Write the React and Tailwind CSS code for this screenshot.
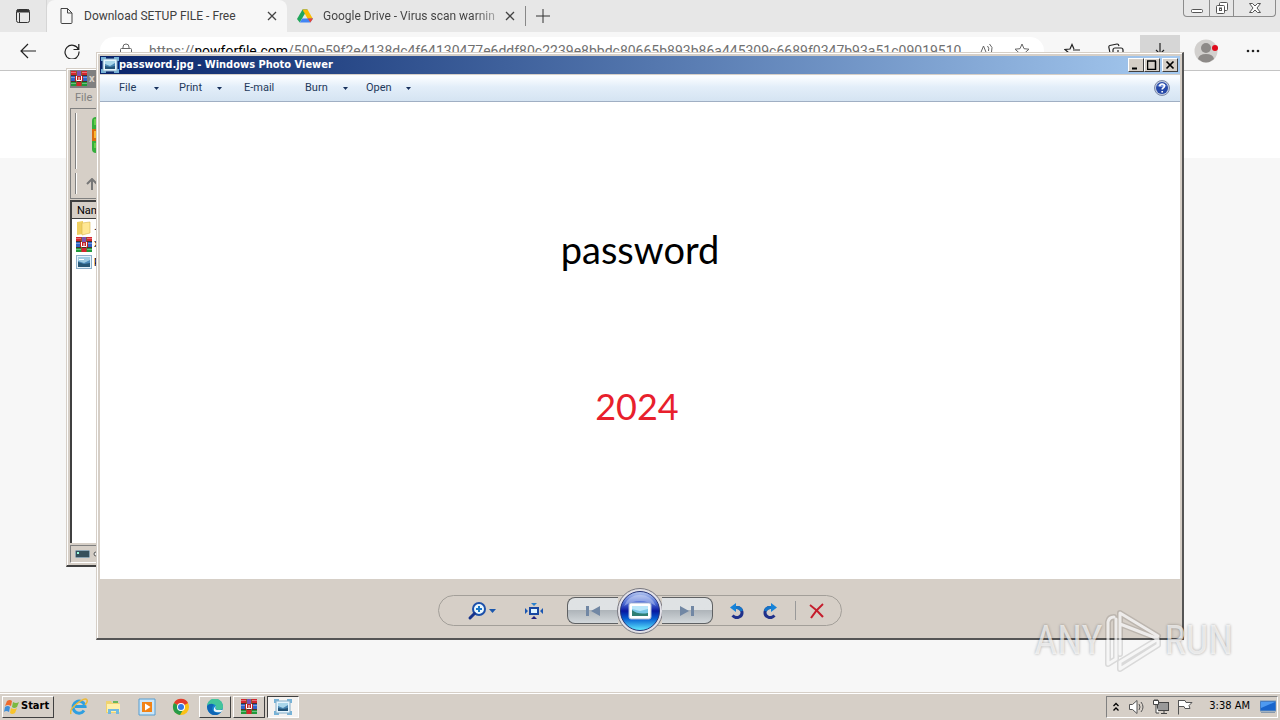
import React from "react";

const RAISED =
  "border border-t-white border-l-white border-r-[#404040] border-b-[#404040] bg-[#d6cfc7]";
const URL_PATH =
  "/500e59f2e4138dc4f64130477e6ddf80c2239e8bbdc80665b893b86a445309c6689f0347b93a51c09019510";

function ArchiveIcon() {
  return (
    <svg className="size-4 shrink-0" viewBox="0 0 16 16" aria-hidden="true">
      <path d="M0 0h16v15H0z" fill="#4a3028" />
      <path d="M0 0h5v4H0zM11 0h5v4h-5z" fill="#d4262e" />
      <path d="M6 0h4v5H6z" fill="#7a55b5" />
      <path d="M0 5h4v5H0zM12 5h4v5h-4z" fill="#2d62c8" />
      <path d="M0 11h5v4H0zM11 11h5v4h-5z" fill="#1f9a3b" />
      <path d="M6 11h4v4H6z" fill="#d4262e" />
      <path d="M5 0h1v15H5zM10 0h1v15h-1z" fill="#8b5a2a" />
      <path d="M4 5h8v5H4z" fill="#c22020" />
      <path d="M5.500 5v4.500h5V5M8 6v3" stroke="#fff" strokeWidth="1" fill="none" />
      <path d="M0 1.500h5M11 1.500h5M0 6.500h4M12 6.500h4M0 12.500h5M11 12.500h5" stroke="#fff" strokeOpacity=".35" />
    </svg>
  );
}

function PictureIcon() {
  return (
    <svg className="size-4 shrink-0" viewBox="0 0 16 16" aria-hidden="true">
      <path d="M0 1h16v14H0z" fill="#8db0ca" />
      <path d="M1 2h14v12H1z" fill="#e3f1fa" />
      <path d="M2 3h12v10H2z" fill="#4d8ab8" />
      <path d="M2 3h12v3L8 9 2 7z" fill="#9fcbe2" />
      <path d="M2 8l6 2 6-1v4H2z" fill="#285877" />
      <path d="M3 5h5v1H3z" fill="#fff" />
    </svg>
  );
}

function ViewerIcon() {
  return (
    <svg className="h-4 w-[18px] shrink-0" viewBox="0 0 18 16" aria-hidden="true">
      <path d="M0 0h5v2H3v2H0zM13 0h5v4h-3V2h-2zM0 12h3v2h2v2H0zM15 12h3v4h-5v-2h2z" fill="#76b3d8" />
      <path d="M2 2h14v12H2z" fill="#e6f5fd" stroke="#86aec8" />
      <path d="M4 4h10v8H4z" fill="#4a86b2" />
      <path d="M4 4h10v2L9 9 4 7z" fill="#a9d6ea" />
      <path d="M4 9l5 1 5-1v3H4z" fill="#245477" />
    </svg>
  );
}

function Caret() {
  return (
    <svg className="h-[3px] w-[5px]" viewBox="0 0 5 3" aria-hidden="true">
      <path d="M0 0h5L2.500 3z" fill="#17305c" />
    </svg>
  );
}

function Browser() {
  return (
    <main className="flex flex-1 flex-col bg-[#f7f7f7] font-['Roboto','Open_Sans',sans-serif] text-xs text-[#404040]">
      <div className="flex h-8 items-stretch bg-[#e7e7e7]">
        <button aria-label="Tab actions" className="flex w-[47px] items-center justify-center border-r border-[#d5d5d5]">
          <svg className="size-4" viewBox="0 0 16 16" fill="none" stroke="#333">
            <rect x="1.500" y="1.500" width="13" height="13" rx="2" />
            <path d="M2 3h12" strokeWidth="3" />
            <path d="M4.500 5v9" />
          </svg>
        </button>
        <div className="flex w-60 items-center rounded-t-lg bg-[#f7f7f7] pl-3 pr-1.5">
          <svg className="mr-2.5 h-4 w-[15px]" viewBox="0 0 15 16" fill="none" stroke="#444">
            <path d="M2 .5h6.500L13 5v9.500a1 1 0 0 1-1 1H3a1 1 0 0 1-1-1v-14zM8.500.5V5H13" />
          </svg>
          <span className="flex-1 whitespace-nowrap">Download SETUP FILE - Free</span>
          <button aria-label="Close tab" className="p-1">
            <svg className="size-2.5" viewBox="0 0 10 10" stroke="#444" strokeWidth="1.300"><path d="M1 1l8 8M9 1l-8 8" /></svg>
          </button>
        </div>
        <div className="flex w-[238px] items-center pl-2.5 pr-1.5">
          <svg className="mr-2.5 h-4 w-4" viewBox="0 0 16 16">
            <path d="M5.500 1.500h5L8 6z" fill="#188038" />
            <path d="M5.500 1.500L0 11l2.700 3.500L8 5.500z" fill="#20a65a" />
            <path d="M10.500 1.500L16 11h-5.300L5.500 1.500z" fill="#fbbc04" />
            <path d="M5.300 10.500H16l-2.700 4H2.700z" fill="#4285f4" />
            <path d="M10.700 10.500H16l-2.700 4z" fill="#ea4335" />
          </svg>
          <span className="flex-1 whitespace-nowrap bg-linear-to-r from-[#404040] from-85% to-[#c8c8c8] bg-clip-text text-transparent">Google Drive - Virus scan warnin</span>
          <button aria-label="Close tab" className="p-1">
            <svg className="size-2.5" viewBox="0 0 10 10" stroke="#444" strokeWidth="1.300"><path d="M1 1l8 8M9 1l-8 8" /></svg>
          </button>
        </div>
        <button aria-label="New tab" className="my-1.5 border-l border-[#888] px-2.5">
          <svg className="size-3.5" viewBox="0 0 14 14" stroke="#333"><path d="M7 0v14M0 7h14" /></svg>
        </button>
        <div className="ml-auto mr-1 flex h-[17px] rounded-b border border-t-0 border-[#8c8c8c]">
          <button aria-label="Minimize browser" className="flex w-[25px] items-end justify-center pb-[3px]">
            <svg className="h-1 w-3" viewBox="0 0 12 4" fill="#fff" stroke="#555"><rect x=".5" y=".5" width="11" height="3" rx="1" /></svg>
          </button>
          <button aria-label="Restore browser" className="flex w-[25px] items-center justify-center border-x border-[#8c8c8c]">
            <svg className="size-3" viewBox="0 0 12 12" fill="#fff" stroke="#555">
              <rect x="3.500" y=".5" width="8" height="8" rx="1" /><rect x=".5" y="3.500" width="8" height="8" rx="1" /><rect x="3.500" y="6" width="2" height="2.500" />
            </svg>
          </button>
          <button aria-label="Close browser" className="flex w-[41px] items-center justify-center">
            <svg className="h-2.5 w-3" viewBox="0 0 12 10" fill="#fff" stroke="#555">
              <path d="M.5.5h3L6 3 8.500.5h3L8 5l3.500 4.500h-3L6 7 3.500 9.500h-3L4 5z" />
            </svg>
          </button>
        </div>
      </div>
      <div className="flex h-[39px] items-center border-b border-[#c4c4c4] pl-5 pr-5">
        <button aria-label="Back">
          <svg className="h-4 w-4" viewBox="0 0 16 16" fill="none" stroke="#222" strokeWidth="1.200"><path d="M16 8H1M8 1L1 8l7 7" /></svg>
        </button>
        <button aria-label="Refresh" className="ml-7">
          <svg className="size-4" viewBox="0 0 16 16" fill="none" stroke="#222" strokeWidth="1.200"><path d="M14.500 6.500A7 7 0 1 0 15 8.500M14.800 1v5.500H9.500" /></svg>
        </button>
        <div className="ml-5 flex h-7 flex-1 items-center rounded-full bg-white pl-[19px] pr-3.5 text-[#707070]">
          <svg className="mr-4 h-4 w-3.5" viewBox="0 0 14 16" fill="none" stroke="#666"><rect x="1.500" y="5.500" width="11" height="9" rx="1" /><path d="M4 5.500V4a3 3 0 0 1 6 0v1.500" /></svg>
          <p className="whitespace-nowrap text-sm">
            https://<span className="text-black">nowforfile.com</span>{URL_PATH}
          </p>
          <button aria-label="Read aloud" className="ml-auto">
            <svg className="size-4" viewBox="0 0 16 16" fill="none" stroke="#666"><path d="M1 14L5.500 3 10 14M2.500 10h6M9.500 3q2 2 1 5M11.500 1q4 3 2 8" /></svg>
          </button>
          <button aria-label="Add favorite" className="ml-5">
            <svg className="size-4" viewBox="0 0 16 16" fill="none" stroke="#666"><path d="M8 1l2 4.700 5 .5-3.800 3.300 1.200 5L8 12l-4.400 2.500 1.200-5L1 6.200l5-.5zM11 12h5" /></svg>
          </button>
        </div>
        <div className="flex items-center pl-5">
          <button aria-label="Favorites">
            <svg className="size-4" viewBox="0 0 16 16" fill="none" stroke="#222" strokeWidth="1.200"><path d="M10 6L8 1.500 6 6l-5 .5L5 10l-1 5 4-2.500M9 7h7M10 10h6M11 13h5" /></svg>
          </button>
          <button aria-label="Collections" className="ml-7">
            <svg className="size-4" viewBox="0 0 16 16" fill="none" stroke="#222" strokeWidth="1.200"><path d="M2 10L.8 4q0-1.300 1-1.500L9 1q1.500-.2 2 2" /><rect x="5" y="5" width="10" height="10" rx="2" /><path d="M10 7v6M7 10h6" /></svg>
          </button>
          <button aria-label="Downloads" className="ml-4 flex h-8 w-10 items-center justify-center bg-[#d6d6d6]">
            <svg className="size-4" viewBox="0 0 16 16" fill="none" stroke="#222" strokeWidth="1.200"><path d="M8 0v10M4 7l4 4 4-4M2 15h12" /></svg>
          </button>
          <button aria-label="Profile" className="ml-3.5">
            <svg className="size-6" viewBox="0 0 24 24"><circle cx="12" cy="12" r="11.500" fill="#d2d0ce" /><circle cx="12" cy="9" r="5" fill="#8d8a88" /><path d="M4 20q1-5 8-5t8 5q-8 7-16 0z" fill="#8d8a88" /><circle cx="21" cy="9" r="3" fill="#e00b1c" /></svg>
          </button>
          <button aria-label="Settings and more" className="ml-7">
            <svg className="h-1 w-3.5" viewBox="0 0 14 4" fill="#222"><circle cx="2" cy="2" r="1.300" /><circle cx="7" cy="2" r="1.300" /><circle cx="12" cy="2" r="1.300" /></svg>
          </button>
        </div>
      </div>
      <div className="h-[87px] bg-white" />
    </main>
  );
}

function ArchiveWindow() {
  return (
    <section
      aria-label="Archive"
      className="absolute bottom-[153px] left-[66px] top-[68px] flex w-20 flex-col border border-[#d6cfc7] border-b-2 border-b-[#404040] bg-[#d6cfc7] font-['Roboto','Open_Sans',sans-serif] text-[11px] text-black"
    >
      <div className="flex flex-1 flex-col border-l border-t border-white pl-0.5">
        <div className="flex h-[18px] items-center bg-[#808080] pl-px font-bold text-[#d6cfc7]">
          <ArchiveIcon />
          <span className="ml-0.5">x</span>
        </div>
        <div className="h-5 pl-[5px] leading-5 text-[#808080]">File</div>
        <div className="flex h-[91px] flex-col border border-[#808080] bg-[#d6cfc7] p-1">
          <div className="flex h-[56px] items-center border-l border-[#808080] pl-4 shadow-[inset_1px_0_0_#fff]">
            <svg className="mb-3 h-9 w-8" viewBox="0 0 32 36" aria-hidden="true">
              <rect width="32" height="36" rx="4" fill="#35ae3c" /><path d="M2 2h30v6H2zM2 26h30v5H2z" fill="#66d04a" /><path d="M0 12h32v12H0z" fill="#d96c10" /><path d="M2 14h30v7H2z" fill="#f9b934" />
            </svg>
          </div>
          <div className="mt-1 flex flex-1 items-center border-l border-[#808080] pl-2.5 shadow-[inset_1px_0_0_#fff]">
            <svg className="size-3" viewBox="0 0 12 12" fill="none" stroke="#777" strokeWidth="2" aria-hidden="true"><path d="M6 12V2M1 6l5-5 5 5" /></svg>
          </div>
        </div>
        <div className="mt-px flex flex-1 flex-col border-l-2 border-t-2 border-[#404040] bg-white">
          <div className="h-[17px] border-b border-[#404040] bg-[#d6cfc7] pl-[5px] leading-[17px]">Name</div>
          <ul className="pl-1">
            <li className="flex h-[17px] items-center gap-0.5">
              <svg className="size-4" viewBox="0 0 16 16" aria-hidden="true"><path d="M1 2l6-1v13l-6 1z" fill="#f0d060" /><path d="M6 3l8-1v11l-8 2z" fill="#ffe793" stroke="#d9b64e" strokeWidth=".6" /></svg>..
            </li>
            <li className="flex h-[17px] items-center gap-0.5"><ArchiveIcon />x</li>
            <li className="flex h-[17px] items-center gap-0.5"><PictureIcon />p</li>
          </ul>
        </div>
        <div className="mb-0.5 mt-0.5 flex h-[18px] items-center border border-t-[#808080] border-l-[#808080] border-b-white border-r-white pl-1">
          <svg className="h-2 w-6" viewBox="0 0 24 8" aria-hidden="true"><rect x=".5" y=".5" width="14" height="7" rx="1" fill="#36505c" stroke="#8aa4b4" /><path d="M2 2h2v2H2z" fill="#9fd" /><circle cx="21" cy="4" r="2" fill="#eee" stroke="#555" /></svg>
        </div>
      </div>
    </section>
  );
}

const MENUS = [
  { label: "File", box: "w-[60px] pr-5", caret: true },
  { label: "Print", box: "w-[65px] pr-[22px]", caret: true },
  { label: "E-mail", box: "w-[61px]", caret: false },
  { label: "Burn", box: "w-[61px] pr-[18px]", caret: true },
  { label: "Open", box: "w-[61px] pr-4", caret: true },
];

function CaptionButton({ label, children }) {
  return (
    <button aria-label={label} className={`flex h-3.5 w-4 items-center justify-center ${RAISED}`}>
      <svg className="size-2.5" viewBox="0 0 10 10" fill="none" stroke="#000">{children}</svg>
    </button>
  );
}

function ViewerControls() {
  return (
    <div className="flex h-[31px] items-center rounded-full border border-[#a39f99] bg-[#d6cfc7]">
      <div className="flex w-32 items-center gap-[29px] pl-[28px]">
        <button aria-label="Change display size" className="flex items-center gap-0.5">
          <svg className="h-5 w-5" viewBox="0 0 20 20" fill="none">
            <circle cx="12" cy="8" r="6" fill="#eaf8ff" stroke="#1c50aa" strokeWidth="2" />
            <path d="M7.500 12.500L3 17" stroke="#17348c" strokeWidth="3" strokeLinecap="round" />
            <path d="M12 5v6M9 8h6" stroke="#1976c8" strokeWidth="2" />
          </svg>
          <svg className="h-1 w-[7px]" viewBox="0 0 7 4" fill="#1c58ad"><path d="M0 0h7L3.500 4z" /></svg>
        </button>
        <button aria-label="Actual size">
          <svg className="size-[18px]" viewBox="0 0 18 18">
            <rect x="5" y="6" width="8" height="6" fill="#dff4ff" stroke="#1747a2" strokeWidth="2" />
            <path d="M6 1h6L9 4z" fill="#2980cd" /><path d="M6 17h6l-3-3z" fill="#20207f" /><path d="M0 6v6l3-3zM18 6v6l-3-3z" fill="#1b57b2" />
          </svg>
        </button>
      </div>
      <div className="flex h-[27px] items-center">
        <button aria-label="Previous" className="flex h-full w-[51px] items-center justify-center rounded-l-lg border border-r-0 border-[#5f6163] bg-linear-to-b from-[#dfe2e4] from-50% via-[#afb5ba] via-50% to-[#d3d8db]">
          <svg className="h-3 w-3.5" viewBox="0 0 14 12" fill="#7187a4"><path d="M0 1h3v10H0zM14 1v10L5 6z" /></svg>
        </button>
        <button aria-label="Play slide show" className="-mx-px size-[46px]">
          <svg className="size-full" viewBox="0 0 46 46">
            <defs>
              <linearGradient id="orb" x1="0" y1="0" x2="0" y2="1"><stop stopColor="#b9caf2" /><stop offset=".3" stopColor="#4b6bd5" /><stop offset=".5" stopColor="#0716a0" /><stop offset=".7" stopColor="#075fd3" /><stop offset="1" stopColor="#62edff" /></linearGradient>
            </defs>
            <circle cx="23" cy="23" r="22.500" fill="#e2e1e8" stroke="#77777f" />
            <circle cx="23" cy="23" r="19.500" fill="url(#orb)" stroke="#263578" />
            <path d="M7 18Q23 8 39 18A17 17 0 0 0 7 18z" fill="#fff" opacity=".3" />
            <rect x="12" y="15" width="22" height="16" rx="2" fill="#fff" stroke="#aebdd8" />
            <rect x="15" y="18" width="16" height="10" fill="#79c7e7" /><path d="M15 22q6 5 16 3v3H15z" fill="#307f73" /><path d="M15 18h16v3l-8 2-8-2z" fill="#b9e7fa" />
          </svg>
        </button>
        <button aria-label="Next" className="flex h-full w-[51px] items-center justify-center rounded-r-lg border border-l-0 border-[#5f6163] bg-linear-to-b from-[#dfe2e4] from-50% via-[#afb5ba] via-50% to-[#d3d8db]">
          <svg className="h-3 w-3.5" viewBox="0 0 14 12" fill="#7187a4"><path d="M0 1v10l9-5zM11 1h3v10h-3z" /></svg>
        </button>
      </div>
      <div className="flex w-32 items-center gap-[17px] pl-4">
        <button aria-label="Rotate counterclockwise">
          <svg className="size-4" viewBox="0 0 16 16" fill="none"><path d="M6 4.500h2a5 5 0 0 1 2.500 9.300Q7 16 3.500 12.500" stroke="#20318b" strokeWidth="3" /><path d="M6 4.500h2a5 5 0 0 1 4.700 3.500" stroke="#1676c8" strokeWidth="3" /><path d="M1 4.500L7 0v9z" fill="#1683d9" /></svg>
        </button>
        <button aria-label="Rotate clockwise">
          <svg className="size-4" viewBox="0 0 16 16" fill="none"><path d="M10 4.500H8a5 5 0 0 0-2.500 9.300Q9 16 12.500 12.500" stroke="#20318b" strokeWidth="3" /><path d="M10 4.500H8A5 5 0 0 0 3.300 8" stroke="#1676c8" strokeWidth="3" /><path d="M15 4.500L9 0v9z" fill="#1683d9" /></svg>
        </button>
        <div className="h-[19px] w-px bg-[#999]" />
        <button aria-label="Delete" className="-ml-1">
          <svg className="size-4" viewBox="0 0 16 16" stroke="#c51d2c" strokeWidth="2"><path d="M1 2q7 5 13 12M14 1Q7 7 2 15" fill="none" /></svg>
        </button>
      </div>
    </div>
  );
}

function PhotoViewer() {
  return (
    <section
      aria-label="Windows Photo Viewer"
      className="absolute bottom-20 left-24 right-24 top-[52px] flex flex-col border border-b-2 border-r-2 border-[#d6cfc7] border-b-[#555] border-r-[#555] bg-[#d6cfc7]"
    >
      <div className="flex flex-1 flex-col border-l border-t border-white px-0.5 pt-0.5">
        <header className="flex h-[18px] items-center bg-linear-to-r from-[#0a246a] to-[#a6caf0] pl-px pr-0.5 text-white">
          <ViewerIcon />
          <h1 className="flex-1 whitespace-nowrap font-['DejaVu_Sans_Condensed','DejaVu_Sans',sans-serif] text-[11px] font-bold">
            password.jpg - Windows Photo Viewer
          </h1>
          <CaptionButton label="Minimize"><path d="M1 8.500h5" strokeWidth="2" /></CaptionButton>
          <CaptionButton label="Maximize"><path d="M.5 1v8.500h8V1M0 1h9" strokeWidth="1.500" /></CaptionButton>
          <span className="w-0.5" />
          <CaptionButton label="Close"><path d="M1.500 1.500l7 7M8.500 1.500l-7 7" strokeWidth="1.700" /></CaptionButton>
        </header>
        <nav className="mt-px flex h-[27px] items-center border-b border-[#a0afc3] bg-linear-to-b from-[#f9fcff] from-10% via-[#e3eef9] via-45% to-[#d5e4f2] pl-[19px] pr-2.5 font-['Roboto','Open_Sans',sans-serif] text-[11px] text-[#1e395b]">
          {MENUS.map((menu) => (
            <button key={menu.label} className={`flex items-center justify-between whitespace-nowrap ${menu.box}`}>
              {menu.label}
              {menu.caret && <Caret />}
            </button>
          ))}
          <button aria-label="Help" className="ml-auto">
            <svg className="size-4" viewBox="0 0 16 16"><circle cx="8" cy="8" r="7.500" fill="#c2cce0" stroke="#7c89a8" /><circle cx="8" cy="8" r="6" fill="#2548a8" /><path d="M3 6q5-5 10 0Q8 8 3 6z" fill="#7f9ce0" /><path d="M5.800 6.300q0-2.300 2.300-2.300t2.300 2q0 1.200-1.300 1.900-.9.500-.9 1.500M8.200 11v1.500" fill="none" stroke="#fff" strokeWidth="1.700" /></svg>
          </button>
        </nav>
        <div className="flex flex-1 flex-col items-center bg-white font-['Lato','Open_Sans',sans-serif] leading-[48px]">
          <p className="mt-[123px] text-[38px] leading-[48px] text-black">password</p>
          <p className="mr-1.5 mt-[109px] text-4xl leading-[48px] text-[#e8202c]">2024</p>
        </div>
        <footer className="flex h-[59px] items-center justify-center pt-1">
          <ViewerControls />
        </footer>
      </div>
    </section>
  );
}

function Watermark() {
  return (
    <div
      aria-label="ANY RUN"
      className="absolute bottom-12 right-[47px] flex items-center gap-0.5 font-['Roboto_Condensed','Liberation_Sans_Narrow','Liberation_Sans',sans-serif] text-[40px] leading-[62px] text-white/70 [text-shadow:0_0_3px_#00000055]"
    >
      <span>ANY</span>
      <svg className="h-[62px] w-[58px]" viewBox="0 0 58 62" fill="none" strokeLinejoin="round" strokeLinecap="round">
        <g stroke="#000" strokeOpacity=".12" strokeWidth="6"><path d="M15 3l38 23-2 2L15 14v30zM9 7q-5 0-6 5v42l8-5V9M15 19M53 29L15 52v7l38-24v-6" /></g>
        <g stroke="#fff" strokeOpacity=".75" strokeWidth="3"><path d="M15 3l38 23-2 2L15 14v30zM9 7q-5 0-6 5v42l8-5V9M53 29L15 52v7l38-24v-6" /></g>
      </svg>
      <span>RUN</span>
    </div>
  );
}

function QuickIcon({ label, children }) {
  return (
    <button aria-label={label} className="flex w-[34px] items-center justify-center">
      <svg className="size-[18px]" viewBox="0 0 18 18">{children}</svg>
    </button>
  );
}

function Taskbar() {
  return (
    <footer className="flex h-7 items-center border-t border-[#d6cfc7] bg-[#d6cfc7] pl-0.5 pr-0.5 shadow-[inset_0_1px_0_#fff] font-['DejaVu_Sans_Condensed','DejaVu_Sans',sans-serif] text-[11px] text-black">
      <button className={`flex h-[22px] w-[52px] items-center gap-px pl-px font-bold ${RAISED}`}>
        <svg className="size-4 shrink-0" viewBox="0 0 16 16" aria-hidden="true"><path d="M3 2q3-2 5 0L7 7Q4 5 1 7z" fill="#ed6a2d" /><path d="M9 3q3 2 6 0l-2 5q-3 2-5 0z" fill="#7bb941" /><path d="M1 8q3-2 5 0l-1 5q-3-2-5 0z" fill="#3e8ed8" /><path d="M7 9q3 2 6 0l-2 5q-3 2-5 0z" fill="#f8c42c" /></svg>
        Start
      </button>
      <nav aria-label="Quick launch" className="ml-2 flex">
        <QuickIcon label="Internet Explorer">
          <path d="M14 12.500a6 6 0 1 1 1-4H5" fill="none" stroke="#2f9fe0" strokeWidth="3" /><path d="M1 16Q-1 12 7 5.500T17 2q1 2-2 5" fill="none" stroke="#edb936" strokeWidth="1.500" />
        </QuickIcon>
        <QuickIcon label="Windows Explorer">
          <path d="M2 3h5l1 2h7v10H2z" fill="#efd36f" /><path d="M3 6h13v8H3z" fill="#fff0aa" /><path d="M4 16v-5h11v5h-3v-3H7v3z" fill="#72b9df" /><path d="M9 3h5v2H9z" fill="#69b65c" />
        </QuickIcon>
        <QuickIcon label="Media Player">
          <path d="M1 1h16v16H1z" fill="#cce6f8" stroke="#569dd0" /><path d="M4 4h10v10H4z" fill="#f28316" /><path d="M7 5.500v7L12.500 9z" fill="#fff" />
        </QuickIcon>
        <QuickIcon label="Chrome">
          <circle cx="9" cy="9" r="8" fill="#fbc116" /><path d="M9 9L2 5a8 8 0 0 1 14 0z" fill="#e33b2e" /><path d="M9 9L2 5a8 8 0 0 0 6 12l4-7z" fill="#269b48" /><circle cx="9" cy="9" r="4" fill="#fff" /><circle cx="9" cy="9" r="3" fill="#3478e5" />
        </QuickIcon>
      </nav>
      <nav aria-label="Running programs" className="ml-px flex gap-0.5">
        <button aria-label="Edge" className={`flex h-[22px] w-8 items-center justify-center ${RAISED}`}>
          <svg className="size-4" viewBox="0 0 16 16"><circle cx="8" cy="8" r="8" fill="#1688cf" /><path d="M0 7a8 8 0 0 1 16 1q0 3-4 3-4 0-3-3 0-3-4-3-4 0-5 2z" fill="#43c49a" /><path d="M0 7q4-4 7-1-3 2-1 6 3 3 8 1-4 5-10 2-4-3-4-8z" fill="#0f65b5" /><path d="M9 7q-2 3 1 4h6l-2 2q-5 1-7-1-1-3 2-5z" fill="#e9f4fa" /></svg>
        </button>
        <button aria-label="WinRAR" className={`flex h-[22px] w-8 items-center justify-center ${RAISED}`}><ArchiveIcon /></button>
        <button aria-label="Photo Viewer" className="flex h-[22px] w-8 items-center justify-center border border-b-white border-l-[#404040] border-r-white border-t-[#404040] bg-[#f5f3f1]"><ViewerIcon /></button>
      </nav>
      <div className="ml-auto flex h-[22px] items-center border border-b-white border-l-[#808080] border-r-white border-t-[#808080] pl-1.5 pr-px">
        <button aria-label="Show hidden icons"><svg className="h-2.5 w-1.5" viewBox="0 0 6 10" fill="none" stroke="#000" strokeWidth="1.300"><path d="M.5 4L3 1.500 5.500 4M.5 8.500L3 6l2.500 2.500" /></svg></button>
        <button aria-label="Volume" className="ml-2.5"><svg className="size-4" viewBox="0 0 16 16" fill="#fff" stroke="#555"><path d="M.5 5.500h3L8 1.500v13l-4.500-4h-3z" /><path d="M10 5q2 3 0 6M12 3q4 5 0 10" fill="none" /></svg></button>
        <button aria-label="Network" className="ml-2"><svg className="size-4" viewBox="0 0 16 16" fill="#fff" stroke="#444"><rect x="4.500" y="3.500" width="11" height="8" fill="#999" /><path d="M8 14.500h6M11 12v2M.5 1.500h5v4h-5zM2 0v2M4 0v2M3 6v8h3" /></svg></button>
        <button aria-label="Action Center" className="ml-2"><svg className="size-4" viewBox="0 0 16 16" fill="#fff" stroke="#555"><path d="M1.500 1v14.500M2 1.500h6l1 2h6l-3 3 1 3H8l-1-2H2" /></svg></button>
        <time className="ml-4 whitespace-nowrap">3:38 AM</time>
        <button aria-label="Show desktop" className="ml-2.5"><svg className="size-4" viewBox="0 0 16 16"><path d="M0 2h16v10H0z" fill="#1965cc" stroke="#7395b8" /><path d="M1 3h14L1 9z" fill="#4e9af0" /><path d="M1 13h14v1H1z" fill="#8799ad" /></svg></button>
      </div>
    </footer>
  );
}

export default function App() {
  return (
    <div className="relative flex min-h-screen flex-col overflow-hidden bg-[#f7f7f7]">
      <Browser />
      <Taskbar />
      <ArchiveWindow />
      <PhotoViewer />
      <Watermark />
    </div>
  );
}
